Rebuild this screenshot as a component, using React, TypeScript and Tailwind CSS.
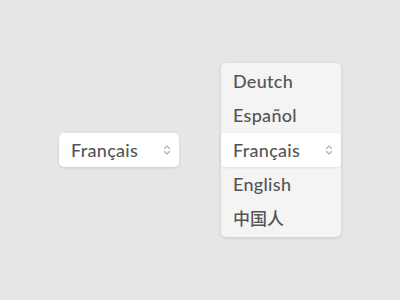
import React from "react";

const Chevrons = () => (
  <svg width="8" height="12" viewBox="0 0 8 12" fill="none" stroke="#b0b0b0" strokeWidth="1.2" strokeLinecap="round" strokeLinejoin="round">
    <path d="M1.5 4.5 L4 2 L6.5 4.5" />
    <path d="M1.5 7.5 L4 10 L6.5 7.5" />
  </svg>
);

export default function App() {
  const font = { fontFamily: "Lato, 'Noto Sans CJK SC', sans-serif" };
  const txt = "text-[18px] font-medium text-[#555555] tracking-[0.3px]";
  return (
    <div className="w-[400px] h-[300px] bg-[#e6e6e6] flex items-center" style={font}>
      <div className="ml-[59px] w-[120px] h-[34px] bg-white rounded-[5px] shadow-[0_1px_3px_rgba(0,0,0,0.12)] flex items-center justify-between pl-[12px] pr-[8px]">
        <span className={txt}>Français</span>
        <Chevrons />
      </div>
      <div className="ml-[42px] w-[120px] bg-[#f4f4f4] rounded-[5px] shadow-[0_1px_4px_rgba(0,0,0,0.12)] flex flex-col">
        <div className="h-[34px] flex items-center pl-[12px] mt-[1px]">
          <span className={txt}>Deutch</span>
        </div>
        <div className="h-[35px] flex items-center pl-[12px]">
          <span className={txt}>Español</span>
        </div>
        <div className="h-[34px] bg-white rounded-[4px] shadow-[0_1px_3px_rgba(0,0,0,0.08)] flex items-center justify-between pl-[12px] pr-[8px]">
          <span className={txt}>Français</span>
          <Chevrons />
        </div>
        <div className="h-[35px] flex items-center pl-[12px]">
          <span className={txt}>English</span>
        </div>
        <div className="h-[34px] flex items-center pl-[12px] mb-[1px]">
          <span className="text-[17px] font-medium text-[#555555]">中国人</span>
        </div>
      </div>
    </div>
  );
}
